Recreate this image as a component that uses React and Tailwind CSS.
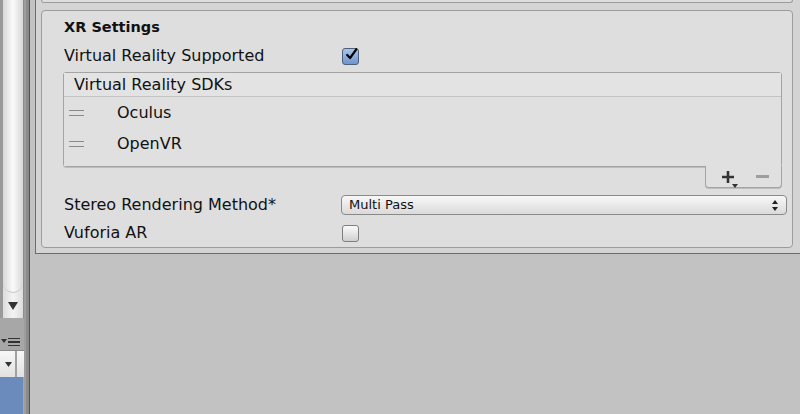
import React from 'react';

const font = { fontFamily: '"DejaVu Sans", "Liberation Sans", sans-serif' };

const Checkbox = ({ checked }) => (
  <div
    className={
      checked
        ? 'w-[17px] h-[17px] rounded-[3px] border border-[#4f5f78] bg-gradient-to-b from-[#a9c4ea] to-[#6f95cf] flex items-center justify-center'
        : 'w-[17px] h-[17px] rounded-[3px] border border-[#7e7e7e] bg-gradient-to-b from-[#fbfbfb] to-[#cfcfcf]'
    }
  >
    {checked && (
      <svg width="15" height="15" viewBox="0 0 15 15" className="-mt-[3px] ml-[2px]">
        <path d="M2.5 8 L6 11.5 L13 1.5" stroke="#000" strokeWidth="2.6" fill="none" strokeLinecap="round" strokeLinejoin="round" />
      </svg>
    )}
  </div>
);

const Handle = () => (
  <div className="w-[15px] flex flex-col gap-[4px]">
    <div className="h-px bg-[#8a8a8a]" />
    <div className="h-px bg-[#8a8a8a]" />
  </div>
);

const Row = ({ label, children, className = '' }) => (
  <div className={`flex items-center h-[22px] ${className}`}>
    <div className="w-[277px] shrink-0 text-[16px] text-[#111]">{label}</div>
    {children}
  </div>
);

export default function App() {
  return (
    <div className="w-[800px] h-[414px] flex bg-[#c2c2c2] overflow-hidden" style={font}>
      {/* left panel strip */}
      <div className="w-[24px] shrink-0 flex flex-col bg-[#a7a7a7]">
        <div className="h-[318px] flex bg-[#c6c6c6]">
          <div className="w-[3px] bg-[#9a9a9a]" />
          <div className="flex-1 flex flex-col bg-gradient-to-r from-[#dcdcdc] via-[#f4f4f4] to-[#dddddd]">
            <div className="h-[293px] rounded-b-[10px] bg-gradient-to-r from-[#d8d8d8] via-[#fafafa] to-[#d8d8d8] border-b border-[#c4c4c4]" />
            <div className="flex-1 flex items-center justify-center">
              <svg width="10" height="8" viewBox="0 0 10 8">
                <path d="M0 0 L10 0 L5 8 Z" fill="#333" />
              </svg>
            </div>
          </div>
          <div className="w-px bg-[#8c8c8c]" />
        </div>
        <div className="h-[32px] flex items-end pb-[4px] pl-[1px] gap-[1px]">
          <svg width="6" height="4" viewBox="0 0 6 4" className="mb-[3px]">
            <path d="M0 0 L6 0 L3 4 Z" fill="#333" />
          </svg>
          <div className="w-[12px] flex flex-col gap-[2px]">
            <div className="h-[1.5px] bg-[#333]" />
            <div className="h-[1.5px] bg-[#333]" />
            <div className="h-[1.5px] bg-[#333]" />
          </div>
        </div>
        <div className="h-[27px] flex border-t border-[#8a8a8a] bg-gradient-to-b from-[#f7f7f7] to-[#e1e1e1]">
          <div className="w-[15px] flex items-center justify-center">
            <svg width="7" height="5" viewBox="0 0 7 5" className="ml-[2px]">
              <path d="M0 0 L7 0 L3.5 5 Z" fill="#333" />
            </svg>
          </div>
          <div className="w-[2px] bg-[#a0a0a0]" />
          <div className="flex-1" />
        </div>
        <div className="flex-1 bg-[#6a8bbb] border-r border-[#9aa8bd]" />
      </div>

      {/* divider */}
      <div className="w-[2px] bg-[#9e9e9e]" />
      <div className="w-[3px] bg-[#8a8a8a]" />
      <div className="w-px bg-[#4f4f4f]" />

      {/* inspector */}
      <div className="flex-1 flex flex-col pl-[5px]">
        <div className="h-[254px] border-l border-b border-[#6c6c6c] bg-[#d4d4d4] pl-[5px] pr-[7px] flex flex-col">
          <div className="h-[3px] border-x border-b border-[#9c9c9c] rounded-b-[4px] bg-[#dedede]" />
          <div className="mt-[7px] h-[238px] border border-[#9c9c9c] rounded-[4px] bg-[#dedede] flex flex-col pl-[22px] pr-[5px] pt-[6px]">
            <div className="h-[22px] flex items-center text-[14.5px] font-bold text-[#111]">XR Settings</div>
            <Row label="Virtual Reality Supported" className="mt-[6px]">
              <div className="ml-[1px]">
                <Checkbox checked />
              </div>
            </Row>

            <div className="mt-[5px] ml-[-1px] mr-[5px] flex flex-col">
              <div className="border border-[#a4a4a4] rounded-[3px] shadow-[0_1px_0_#bdbdbd] flex flex-col">
                <div className="h-[24px] bg-[#e3e3e3] border-b border-[#c4c4c4] flex items-center pl-[10px] text-[16px] text-[#111]">
                  Virtual Reality SDKs
                </div>
                <div className="h-[69px] bg-[#e0e0e0] flex flex-col">
                  <div className="h-[31px] flex items-center pl-[5px]">
                    <Handle />
                    <span className="ml-[33px] text-[16px] text-[#111]">Oculus</span>
                  </div>
                  <div className="h-[31px] flex items-center pl-[5px]">
                    <Handle />
                    <span className="ml-[33px] text-[16px] text-[#111]">OpenVR</span>
                  </div>
                </div>
              </div>
              <div className="self-end w-[77px] h-[22px] -mt-px border border-t-0 border-[#a4a4a4] rounded-b-[4px] bg-[#e0e0e0] shadow-[0_1px_0_#bdbdbd] flex items-center justify-between pl-[15px] pr-[12px]">
                <div className="relative w-[14px] h-[14px]">
                  <svg width="14" height="14" viewBox="0 0 14 14">
                    <path d="M7 1 V13 M1 7 H13" stroke="#333" strokeWidth="2.6" />
                  </svg>
                  <svg width="6" height="4" viewBox="0 0 6 4" className="absolute left-[11px] top-[14px]">
                    <path d="M0 0 L6 0 L3 4 Z" fill="#333" />
                  </svg>
                </div>
                <div className="w-[13px] h-[2.5px] bg-[#9e9e9e]" />
              </div>
            </div>

            <Row label="Stereo Rendering Method*" className="mt-[6px]">
              <div className="flex-1 h-[20px] rounded-[4px] border border-[#8a8a8a] bg-gradient-to-b from-[#f8f8f8] to-[#dadada] flex items-center pl-[7px] pr-[8px] text-[13px] text-[#111]">
                <span className="flex-1">Multi Pass</span>
                <svg width="6" height="11" viewBox="0 0 6 11">
                  <path d="M0 4 L3 0 L6 4 Z M0 7 L3 11 L6 7 Z" fill="#222" />
                </svg>
              </div>
            </Row>
            <Row label="Vuforia AR" className="mt-[6px]">
              <div className="ml-[1px]">
                <Checkbox />
              </div>
            </Row>
          </div>
        </div>
      </div>
    </div>
  );
}
